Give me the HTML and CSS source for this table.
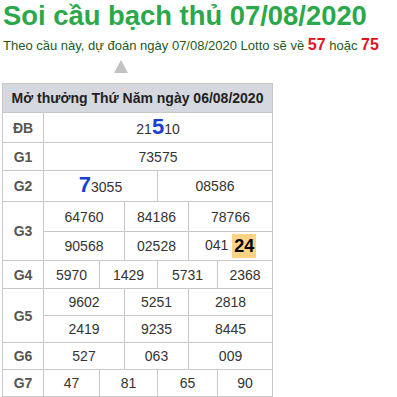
FILE: index.html
```html
<!DOCTYPE html>
<html lang="vi">
<head>
<meta charset="utf-8">
<title>Soi cầu bạch thủ</title>
<link rel="stylesheet" href="styles.css">
</head>
<body>
<div class="page">
  <h1 class="title">Soi cầu bạch thủ 07/08/2020</h1>
  <p class="lead">Theo cầu này, dự đoán ngày 07/08/2020 Lotto sẽ về <b class="hot">57</b> hoặc <b class="hot">75</b></p>
  <div class="arrow-row"><span class="arrow"></span></div>
  <table class="kq">
    <colgroup>
      <col class="c0"><col class="c1"><col class="c2"><col class="c3"><col class="c4"><col class="c5"><col class="c6">
    </colgroup>
    <thead>
      <tr class="r-head"><th colspan="7">Mở thưởng Thứ Năm ngày 06/08/2020</th></tr>
    </thead>
    <tbody>
      <tr class="r-db"><td class="lbl">ĐB</td><td colspan="6">21<b class="big">5</b>10</td></tr>
      <tr class="r-g1"><td class="lbl">G1</td><td colspan="6">73575</td></tr>
      <tr class="r-g2"><td class="lbl">G2</td><td colspan="3"><b class="big">7</b>3055</td><td colspan="3">08586</td></tr>
      <tr class="r-g3a"><td class="lbl" rowspan="2">G3</td><td colspan="2">64760</td><td colspan="2">84186</td><td colspan="2">78766</td></tr>
      <tr class="r-g3b"><td colspan="2">90568</td><td colspan="2">02528</td><td colspan="2">041 <b class="mark">24</b></td></tr>
      <tr class="r-g4"><td class="lbl">G4</td><td>5970</td><td colspan="2">1429</td><td colspan="2">5731</td><td>2368</td></tr>
      <tr class="r-g5a"><td class="lbl" rowspan="2">G5</td><td colspan="2">9602</td><td colspan="2">5251</td><td colspan="2">2818</td></tr>
      <tr class="r-g5b"><td colspan="2">2419</td><td colspan="2">9235</td><td colspan="2">8445</td></tr>
      <tr class="r-g6"><td class="lbl">G6</td><td colspan="2">527</td><td colspan="2">063</td><td colspan="2">009</td></tr>
      <tr class="r-g7"><td class="lbl">G7</td><td>47</td><td colspan="2">81</td><td colspan="2">65</td><td>90</td></tr>
    </tbody>
  </table>
</div>
</body>
</html>
```
FILE: styles.css
```css
html, body {
  margin: 0;
  padding: 0;
  background: #fff;
}
body {
  font-family: Arial, "Liberation Sans", sans-serif;
}
.page {
  padding: 0 0 0 2px;
}
.title {
  margin: 0;
  padding: 0 0 0 1px;
  font-size: 27.4px;
  line-height: 32px;
  font-weight: bold;
  color: #2aa84a;
}
.lead {
  margin: 3px 0 0 1px;
  font-size: 13px;
  line-height: 20px;
  color: #1e5a1e;
  white-space: nowrap;
}
.hot {
  color: #e0141e;
  font-size: 16px;
}
.arrow-row {
  height: 27px;
  padding-left: 112px;
  display: flex;
  align-items: flex-start;
  padding-top: 4px;
  box-sizing: border-box;
}
.arrow {
  width: 0;
  height: 0;
  border-left: 7px solid transparent;
  border-right: 7px solid transparent;
  border-bottom: 13px solid #c2c2c2;
}
.kq {
  border-collapse: collapse;
  table-layout: fixed;
  width: 271px;
  font-size: 14px;
  line-height: 16px;
  color: #333;
}
.c0 { width: 41px; }
.c1 { width: 56px; }
.c2 { width: 25px; }
.c3 { width: 33px; }
.c4 { width: 31px; }
.c5 { width: 29px; }
.c6 { width: 55px; }
.kq th, .kq td {
  border: 1px solid #c8c8c8;
  padding: 0;
  text-align: center;
  vertical-align: middle;
}
.kq th {
  background: #d6d8df;
  font-weight: bold;
  color: #222;
  height: 28px;
}
.kq td.lbl {
  font-weight: bold;
  color: #555;
}
.r-db td { height: 29px; }
.r-g1 td { height: 27px; }
.r-g2 td { height: 30px; }
.r-g3a td { height: 29px; }
.r-g3b td { height: 28px; }
.r-g4 td { height: 27px; }
.r-g5a td { height: 26px; }
.r-g5b td { height: 26px; }
.r-g6 td { height: 26px; }
.r-g7 td { height: 26px; }
.big {
  color: #1a3fd4;
  font-size: 22px;
  line-height: 16px;
}
.mark {
  display: inline-block;
  background: #fbd383;
  color: #000;
  font-size: 18px;
  line-height: 24px;
  padding: 0 2px;
  vertical-align: middle;
}
```
